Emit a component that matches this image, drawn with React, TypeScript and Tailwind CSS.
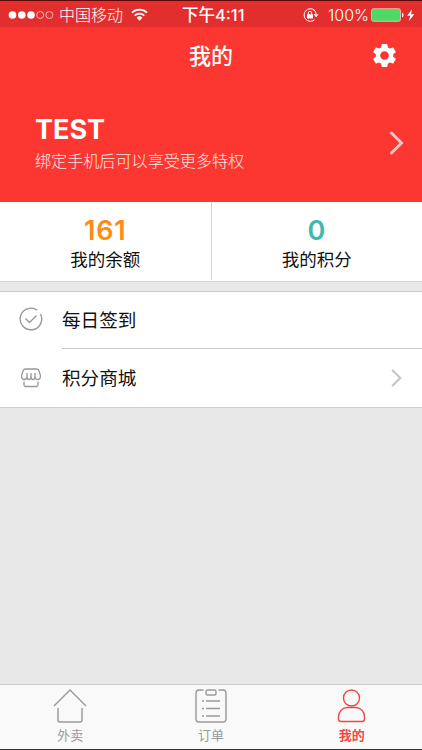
import { ReactNode } from "react";
import { MdSettings } from "react-icons/md";

const StatusBar = () => (
  <div className="flex h-[27px] items-center border-t border-[#5c0808] bg-[#e22f2e] text-white">
    <svg className="ml-2 mt-0.5 shrink-0" width="46" height="10" viewBox="0 0 46 10">
      <circle cx="4.5" cy="5" r="3.8" fill="#fff" />
      <circle cx="13.8" cy="5" r="3.8" fill="#fff" />
      <circle cx="23" cy="5" r="3.8" fill="#fff" />
      <circle cx="32.2" cy="5" r="3.5" fill="none" stroke="#fbd5d5" strokeWidth="0.8" />
      <circle cx="41.4" cy="5" r="3.5" fill="none" stroke="#fbd5d5" strokeWidth="0.8" />
    </svg>
    <span className="ml-[5px] mt-0.5 w-[64px] whitespace-nowrap text-[16px] font-light leading-[26px]">
      中国移动
    </span>
    <svg className="ml-2 shrink-0" width="17" height="13" viewBox="0 0 17 13">
      <path d="M1 4.6a11 11 0 0 1 15 0" fill="none" stroke="#fff" strokeWidth="1.8" />
      <path d="M3.7 7.6a7 7 0 0 1 9.6 0" fill="none" stroke="#fff" strokeWidth="1.7" />
      <path d="M8.5 12.8 5.6 9.7a4.2 4.2 0 0 1 5.8 0z" fill="#fff" />
    </svg>
    <span className="ml-[34px] mt-0.5 w-[63px] whitespace-nowrap text-[16.5px] font-medium leading-[26px]">
      下午4:11
    </span>
    <svg className="ml-[58px] mt-0.5 shrink-0" width="16" height="14" viewBox="0 0 16 14">
      <path d="M11.6 2.3A6.3 6.3 0 1 0 11.6 11.7" fill="none" stroke="#fff" />
      <path d="M10 1.3A6.3 6.3 0 0 1 13.3 6.3" fill="none" stroke="#fff" />
      <path d="M10.6 6.2h5l-2.5 3z" fill="#fff" />
      <rect x="4" y="6.2" width="6" height="4.3" rx="0.5" fill="#fff" />
      <path d="M5.3 6.5V5a1.7 1.7 0 0 1 3.4 0v1.5" fill="none" stroke="#fff" />
    </svg>
    <span className="ml-[9px] mt-0.5 w-[41px] whitespace-nowrap text-[16px] font-light leading-[26px]">
      100%
    </span>
    <svg className="ml-0.5 mt-0.5 shrink-0" width="44" height="14" viewBox="0 0 44 14">
      <rect x="0.5" y="0.7" width="29" height="12.6" rx="2" fill="#4cd964" stroke="#fbb0a0" />
      <path d="M31 4.7c2 .5 2 4.1 0 4.6z" fill="#fff" />
      <path d="M41 1.2 36.2 7.8h3.1L38 13l5.3-6.8h-3.2z" fill="#fff" />
    </svg>
  </div>
);

const Chevron = ({ className }: { className: string }) => (
  <svg className={className} viewBox="0 0 14 24" fill="none" stroke="currentColor">
    <path d="M2 2 12 12 2 22" strokeWidth="3" strokeLinecap="round" strokeLinejoin="miter" />
  </svg>
);

const Stat = ({ value, label, color }: { value: string; label: string; color: string }) => (
  <div className="flex flex-1 flex-col items-center pt-[13px]">
    <span className={`text-[27px] font-semibold leading-[32px] tracking-[0.8px] ${color}`}>{value}</span>
    <span className="text-[17.5px] leading-[25px]">{label}</span>
  </div>
);

const Tab = ({ label, className, children }: { label: string; className: string; children: ReactNode }) => (
  <div className={`flex flex-1 flex-col items-center pt-[3px] ${className}`}>
    <svg width="36" height="36" viewBox="0 0 36 36" fill="none" stroke="currentColor" strokeWidth="1.4">
      {children}
    </svg>
    <span className="mt-0.5 text-[13px] leading-[18px]">{label}</span>
  </div>
);

export default function App() {
  return (
    <div className="flex h-[750px] w-[422px] flex-col overflow-hidden bg-[#e8e8e8] font-['Inter','Noto_Sans_CJK_SC',sans-serif] text-[#111]">
      <StatusBar />

      <header className="h-[175px] bg-[#fc3630] text-white">
        <div className="grid h-[58px] grid-cols-[1fr_auto_1fr] items-center px-[23px]">
          <h1 className="col-start-2 text-[22px] font-medium leading-8">我的</h1>
          <MdSettings className="mb-0.5 h-[29px] w-[29px] justify-self-end" />
        </div>
        <div className="flex items-center justify-between pl-[35px] pr-[18px] pt-[26px]">
          <div>
            <div className="pt-px text-[27px] font-bold leading-[35px]">TEST</div>
            <div className="text-[16.1px] font-light leading-7 text-[#ffe9e7]">
              绑定手机后可以享受更多特权
            </div>
          </div>
          <Chevron className="h-6 w-[15px] text-[#e6c4c8]" />
        </div>
      </header>

      <section className="flex h-[80px] border-b border-[#d5d5d5] bg-white">
        <Stat value="161" label="我的余额" color="text-[#ff8a15]" />
        <div className="h-[78px] w-px bg-[#d5d5d5]" />
        <Stat value="0" label="我的积分" color="text-[#3fb8af]" />
      </section>

      <section className="mt-[9px] border-y border-[#cfcfcf] bg-white">
        <div className="flex h-[57px] items-center">
          <svg className="mb-[3px] ml-[19px] w-6 text-[#999]" viewBox="0 0 24 24" fill="none" stroke="currentColor" strokeWidth="1.4">
            <path d="M18.2 3.2A10.8 10.8 0 1 0 21.5 7" />
            <path d="m6.500 11.500 4 4 7-7" />
          </svg>
          <div className="ml-[19px] flex h-full flex-1 items-center border-b border-[#c8c7cc] pt-0.5 text-[18.6px]">
            每日签到
          </div>
        </div>
        <div className="flex h-[58px] items-center">
          <svg className="ml-[21px] w-5 text-[#999]" viewBox="0 0 20 20" fill="none" stroke="currentColor" strokeWidth="1.3">
            <path d="M4.500 1h11c1.200 0 2 .6 2.400 1.800L19.300 7c.5 2.800-.7 4.500-2.500 4.500-1.500 0-2.800-1-2.800-3 0 2-1 3-2 3s-2-1-2-3c0 2-1 3-2 3s-2-1-2-3c0 2-1.300 3-2.800 3C1.400 11.500.2 9.800.7 7l1.400-4.200C2.500 1.600 3.300 1 4.500 1z" />
            <path d="M6 9V5M10 9V5M14 9V5M3 13.500V17a1.500 1.500 0 0 0 1.500 1.500h11A1.500 1.500 0 0 0 17 17v-3.500" />
          </svg>
          <div className="ml-[21px] flex-1 pt-0.5 text-[18.6px]">积分商城</div>
          <Chevron className="mr-5 h-[18px] w-[11px] text-[#c7c7cc]" />
        </div>
      </section>

      <nav className="mt-auto flex h-[66px] border-b border-t border-b-[#333] border-t-[#cfcfcf] bg-[#f9f9f9]">
        <Tab label="外卖" className="text-[#999]">
          <path d="M2 18 18 2l16 16" />
          <path d="M6 20v12a2 2 0 0 0 2 2h20a2 2 0 0 0 2-2V20" />
        </Tab>
        <Tab label="订单" className="text-[#999]">
          <path d="M10.500 2H6a3 3 0 0 0-3 3v26a3 3 0 0 0 3 3h24a3 3 0 0 0 3-3V5a3 3 0 0 0-3-3h-4.500" />
          <rect x="13" y="2" width="10" height="5" rx="1.5" />
          <path d="M9 13h2M13 13h14M9 20.500h2M13 20.500h14M9 28h2M13 28h14" />
        </Tab>
        <Tab label="我的" className="font-bold text-[#ee4a45]">
          <circle cx="17.5" cy="10" r="8" />
          <path d="M13.500 19.500h8a9 9 0 0 1 9 9V31a2.500 2.500 0 0 1-2.500 2.500H7A2.500 2.500 0 0 1 4.500 31v-2.500a9 9 0 0 1 9-9z" />
        </Tab>
      </nav>
    </div>
  );
}
